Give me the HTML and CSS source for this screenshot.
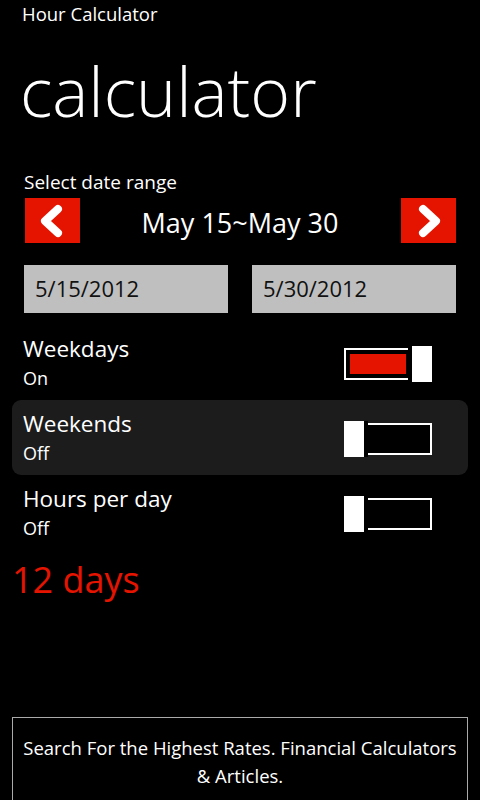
FILE: index.html
```html
<!DOCTYPE html>
<html lang="en">
<head>
<meta charset="UTF-8">
<meta name="viewport" content="width=device-width, initial-scale=1.0">
<title>Hour Calculator</title>
<link rel="stylesheet" href="styles.css">
</head>
<body>
<div class="page">
    <div class="app-title">Hour Calculator</div>
    <h1 class="page-title">calculator</h1>

    <div class="range">
        <div class="range-label">Select date range</div>
        <div class="range-nav">
            <button class="nav-btn" type="button">
                <svg width="55" height="45" viewBox="0 0 55 45"><path d="M33 11 L20 23 L33 35" fill="none" stroke="#fff" stroke-width="8" stroke-linecap="round" stroke-linejoin="round"/></svg>
            </button>
            <div class="range-text">May 15~May 30</div>
            <button class="nav-btn" type="button">
                <svg width="55" height="45" viewBox="0 0 55 45"><path d="M22 11 L35 23 L22 35" fill="none" stroke="#fff" stroke-width="8" stroke-linecap="round" stroke-linejoin="round"/></svg>
            </button>
        </div>
        <div class="dates">
            <div class="date-box">5/15/2012</div>
            <div class="date-box">5/30/2012</div>
        </div>
    </div>

    <div class="settings">
        <div class="setting">
            <div class="setting-text">
                <div class="setting-name">Weekdays</div>
                <div class="setting-state">On</div>
            </div>
            <div class="toggle on">
                <div class="track"><div class="fill"></div></div>
                <div class="thumb"></div>
            </div>
        </div>
        <div class="setting active">
            <div class="setting-text">
                <div class="setting-name">Weekends</div>
                <div class="setting-state">Off</div>
            </div>
            <div class="toggle">
                <div class="thumb"></div>
                <div class="track"></div>
            </div>
        </div>
        <div class="setting">
            <div class="setting-text">
                <div class="setting-name">Hours per day</div>
                <div class="setting-state">Off</div>
            </div>
            <div class="toggle">
                <div class="thumb"></div>
                <div class="track"></div>
            </div>
        </div>
    </div>

    <div class="result">12 days</div>

    <div class="ad">Search For the Highest Rates. Financial Calculators<br>&amp; Articles.</div>
</div>
</body>
</html>
```

FILE: styles.css
```css
body {
    font-family: "Open Sans", "Noto Sans", sans-serif;
    background-color: #000;
    color: #fff;
    margin: 0;
    padding: 0;
}
.page {
    width: 480px;
    height: 800px;
    position: relative;
    overflow: hidden;
}
.app-title {
    font-size: 18.5px;
    padding: 1px 0 0 22px;
    height: 31px;
}
.page-title {
    font-size: 68px;
    font-weight: 300;
    margin: 0;
    padding: 19px 0 0 20px;
    line-height: 80px;
    height: 118px;
}
.range {
    padding: 0 24px;
}
.range-label {
    font-size: 19px;
    line-height: 26px;
    height: 29px;
}
.range-nav {
    display: flex;
    align-items: center;
    justify-content: space-between;
    height: 45px;
}
.nav-btn {
    width: 55px;
    height: 45px;
    padding: 0;
    border: none;
    background-color: #e51400;
    margin-left: 1px;
}
.nav-btn svg {
    display: block;
}
.range-text {
    font-size: 27px;
    margin-top: 4px;
}
.dates {
    display: flex;
    justify-content: space-between;
    margin-top: 22px;
}
.date-box {
    width: 204px;
    height: 48px;
    box-sizing: border-box;
    background-color: #bfbfbf;
    color: #111;
    font-size: 22px;
    line-height: 47px;
    padding-left: 11px;
}
.settings {
    margin-top: 12px;
    padding: 0 12px;
}
.setting {
    display: flex;
    justify-content: space-between;
    align-items: center;
    height: 75px;
    padding: 0 36px 0 11px;
    border-radius: 9px;
}
.setting.active {
    background-color: #1c1c1c;
}
.setting-name {
    font-size: 22.5px;
    line-height: 28px;
}
.setting-state {
    font-size: 18px;
    line-height: 26px;
    margin-top: 2px;
}
.toggle {
    display: flex;
    align-items: center;
    width: 88px;
    height: 36px;
    margin-top: 2px;
}
.track {
    flex: 1;
    height: 32px;
    box-sizing: border-box;
    border: 2px solid #fff;
    background-color: #000;
}
.toggle.on .track {
    padding: 4px;
}
.fill {
    height: 100%;
    background-color: #e51400;
}
.thumb {
    width: 20px;
    height: 36px;
    background-color: #fff;
    border-left: 4px solid #000;
    border-right: 4px solid #000;
    margin: 0 -4px;
    position: relative;
}
.toggle.on .thumb {
    margin-left: -4px;
    margin-right: 0;
    border-right: none;
}
.toggle .thumb:first-child {
    margin-left: 0;
    border-left: none;
}
.result {
    color: #e51400;
    font-size: 36px;
    padding-left: 12px;
    margin-top: 5px;
}
.ad {
    position: absolute;
    left: 12px;
    right: 12px;
    top: 717px;
    height: 100px;
    border: 1px solid #aaa;
    font-size: 18.5px;
    line-height: 28px;
    text-align: center;
    padding-top: 16px;
    box-sizing: border-box;
}
```
